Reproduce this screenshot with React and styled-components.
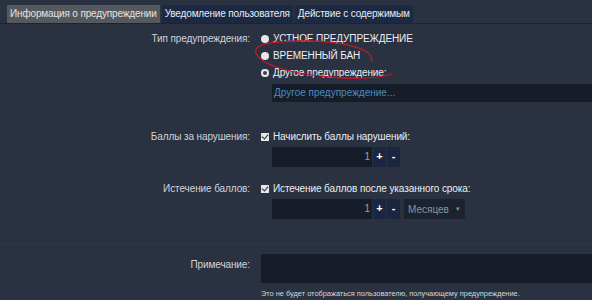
import React from "react";
import styled, { createGlobalStyle } from "styled-components";

const GlobalStyle = createGlobalStyle`
  body {
    margin: 0;
    background: #2a3140;
    font-family: "Liberation Sans", Arial, sans-serif;
  }
`;

const tabs = [
  { name: "Информация о предупреждении", active: true },
  { name: "Уведомление пользователя" },
  { name: "Действие с содержимым" },
];

const warnings = [
  { name: "УСТНОЕ ПРЕДУПРЕЖДЕНИЕ" },
  { name: "ВРЕМЕННЫЙ БАН" },
  { name: "Другое предупреждение:", checked: true },
];

const App = () => {
  return (
    <Page>
      <GlobalStyle />
      <TabBar>
        {tabs.map(({ name, active }) => (
          <Tab key={name} $active={active}>{name}</Tab>
        ))}
      </TabBar>

      <Section $pad="6px 0 0">
        <Row>
          <Label>Тип предупреждения:</Label>
          <Field>
            {warnings.map(({ name, checked }) => (
              <Option key={name}>
                <Radio $checked={checked} />
                {name}
              </Option>
            ))}
            <TextInput>Другое предупреждение...</TextInput>
          </Field>
        </Row>
      </Section>

      <Section $pad="26px 0 0">
        <Row>
          <Label>Баллы за нарушения:</Label>
          <Field>
            <Option>
              <Check />
              Начислить баллы нарушений:
            </Option>
            <Spinner>
              <NumberBox>1</NumberBox>
              <SpinButton>+</SpinButton>
              <SpinButton>-</SpinButton>
            </Spinner>
          </Field>
        </Row>
        <Row $top={13}>
          <Label>Истечение баллов:</Label>
          <Field>
            <Option>
              <Check />
              Истечение баллов после указанного срока:
            </Option>
            <Spinner>
              <NumberBox>1</NumberBox>
              <SpinButton>+</SpinButton>
              <SpinButton>-</SpinButton>
              <Select>Месяцев <Caret>▼</Caret></Select>
            </Spinner>
          </Field>
        </Row>
      </Section>

      <NoteSection>
        <Row>
          <Label $pt={5}>Примечание:</Label>
          <Field>
            <TextArea />
            <Hint>Это не будет отображаться пользователю, получающему предупреждение.</Hint>
          </Field>
        </Row>
      </NoteSection>

      <Scribble width="592" height="300" viewBox="0 0 592 300">
        <path
          d="M372 61 C373 48 342 41 302 41 C272 41 253 44 256 53 C260 64 290 74 330 77 C352 79 375 79 392 74"
          fill="none"
          stroke="#c0182a"
          strokeWidth="1.3"
          strokeLinecap="round"
        />
      </Scribble>
    </Page>
  );
};

const Page = styled.div`
  position: relative;
  width: 592px;
  height: 300px;
  overflow: hidden;
  background: #2a3140;
`;

const TabBar = styled.div`
  display: flex;
  gap: 2px;
  padding: 5px 0 0 7px;
  border-bottom: 1px solid #1d2330;
`;

const Tab = styled.div`
  height: 18px;
  line-height: 18px;
  padding: 0 3px;
  font-size: 10px;
  letter-spacing: -0.15px;
  color: ${(p) => (p.$active ? "#e4e4e4" : "#e8ecf2")};
  background: ${(p) => (p.$active ? "#55585c" : "#1b2942")};
`;

const Section = styled.div`
  padding: ${(p) => p.$pad};
`;

const NoteSection = styled.div`
  margin-top: 25px;
  padding-top: 9px;
  border-top: 1px solid #303848;
`;

const Row = styled.div`
  display: grid;
  grid-template-columns: 250px 1fr;
  column-gap: 11px;
  margin-top: ${(p) => p.$top || 0}px;
`;

const Label = styled.div`
  text-align: right;
  font-size: 10px;
  letter-spacing: -0.1px;
  color: #d0d4da;
  padding-top: ${(p) => p.$pt || 3}px;
`;

const Field = styled.div`
  display: flex;
  flex-direction: column;
  min-width: 0;
`;

const Option = styled.div`
  display: flex;
  align-items: center;
  gap: 4px;
  height: 17px;
  font-size: 10px;
  letter-spacing: -0.1px;
  color: #eceef1;
`;

const Radio = styled.span`
  width: 8px;
  height: 8px;
  border-radius: 50%;
  background: #e6e6e6;
  box-sizing: border-box;
  box-shadow: ${(p) => (p.$checked ? "inset 0 0 0 2px #e6e6e6, inset 0 0 0 4px #3b4150" : "none")};
`;

const Check = styled.span`
  position: relative;
  width: 8px;
  height: 8px;
  background: #e6e6e6;
  &::after {
    content: "";
    position: absolute;
    left: 2px;
    top: 0px;
    width: 3px;
    height: 5px;
    border: solid #2a2a2a;
    border-width: 0 1.5px 1.5px 0;
    transform: rotate(40deg);
  }
`;

const TextInput = styled.div`
  margin: 3px 0 0 11px;
  height: 18px;
  line-height: 18px;
  padding: 0 2px;
  background: #161d28;
  color: #4b8bbf;
  font-size: 10px;
`;

const Spinner = styled.div`
  display: flex;
  gap: 1px;
  margin: 2px 0 0 11px;
  height: 20px;
`;

const NumberBox = styled.div`
  width: 98px;
  line-height: 20px;
  padding-right: 2px;
  text-align: right;
  background: #161d28;
  color: #9aa0aa;
  font-size: 10px;
`;

const SpinButton = styled.div`
  width: 13px;
  line-height: 19px;
  text-align: center;
  background: #1b2740;
  color: #ffffff;
  font-weight: bold;
  font-size: 11px;
`;

const Select = styled.div`
  margin-left: 3px;
  padding: 0 4px;
  line-height: 20px;
  background: #1b2230;
  color: #8c929c;
  font-size: 10px;
`;

const Caret = styled.span`
  font-size: 6px;
  vertical-align: 2px;
  margin-left: 3px;
`;

const TextArea = styled.div`
  height: 29px;
  background: #161d28;
`;

const Hint = styled.div`
  margin-top: 6px;
  font-size: 7.4px;
  color: #d4d8de;
`;

const Scribble = styled.svg`
  position: absolute;
  left: 0;
  top: 0;
  pointer-events: none;
`;

export default App;
